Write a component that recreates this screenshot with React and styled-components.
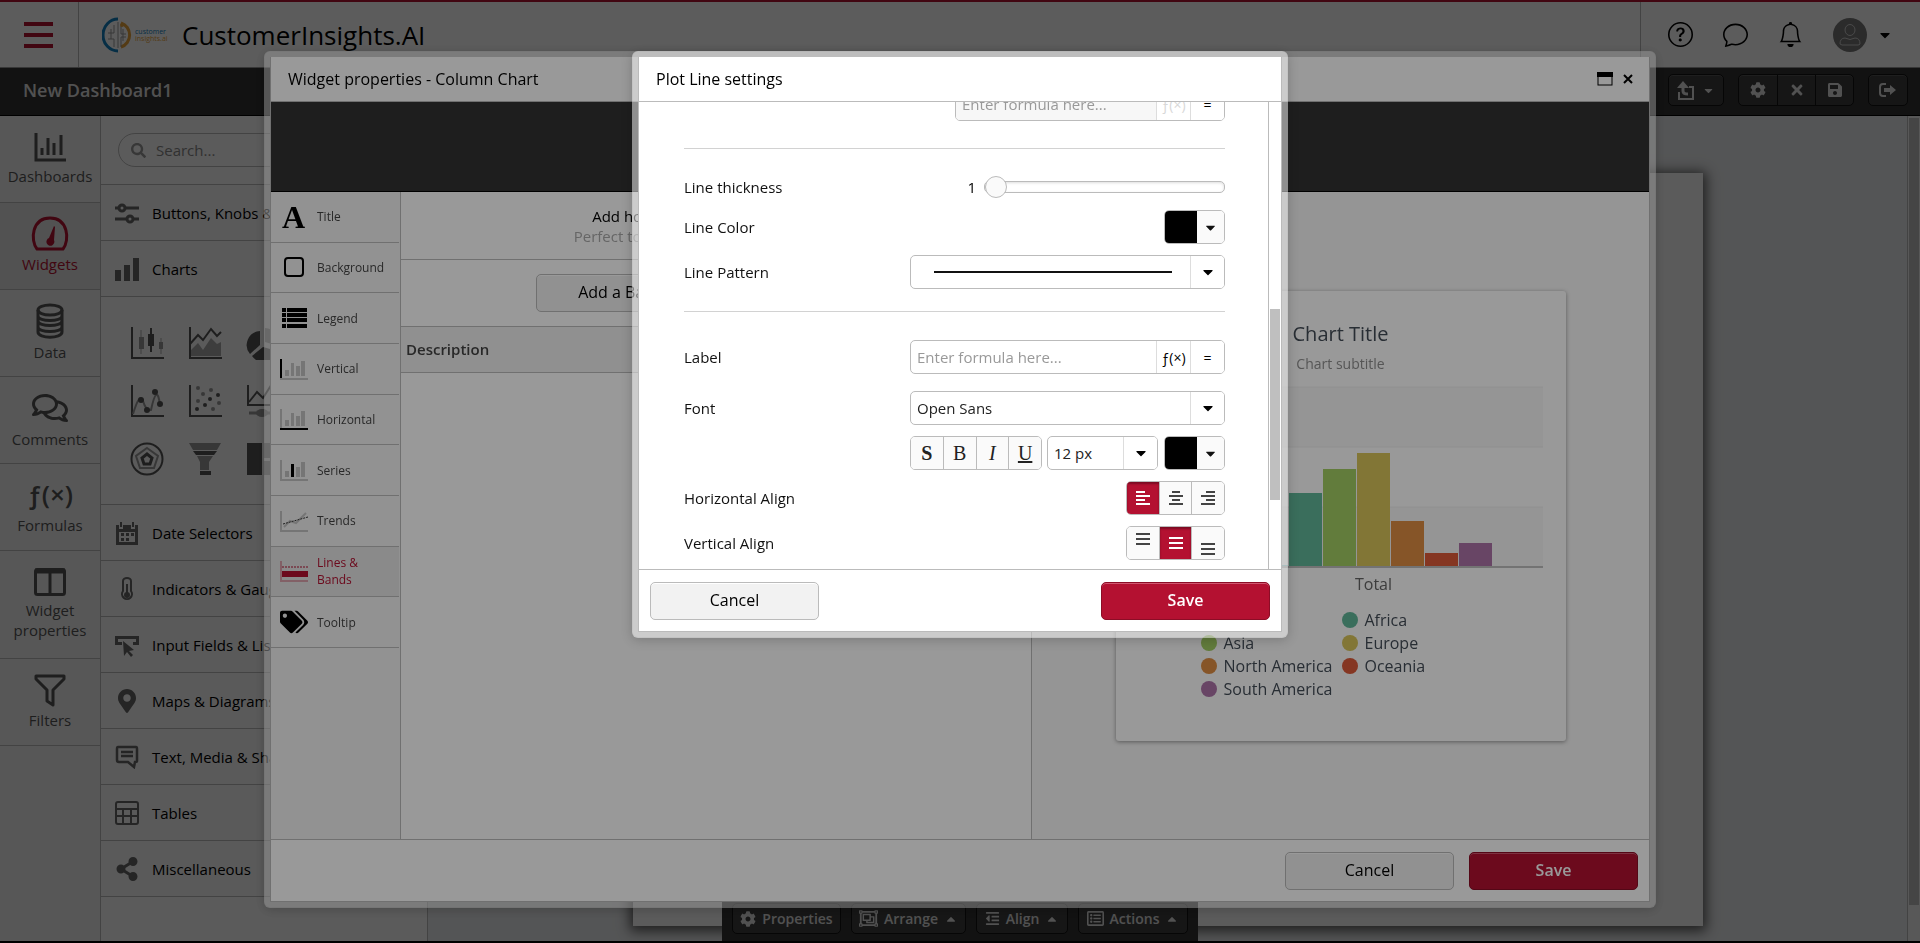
import React from "react";
import styled, { createGlobalStyle, css } from "styled-components";
import { FaRegComments, FaMapMarkerAlt, FaShareAlt, FaTags, FaCog, FaTimes, FaSave, FaOutdent, FaRegListAlt, FaRegObjectGroup, FaSearch, FaCaretDown, FaCaretUp } from "react-icons/fa";
import { BsQuestionCircle, BsChat, BsBell } from "react-icons/bs";

const red = "#b41131";
const line = "#bbbbbb";
const dark = "#323232";

const GlobalStyle = createGlobalStyle`
  * { box-sizing: border-box; }
  html, body, #root { height: 100%; }
  body { margin: 0; overflow: hidden; background: #000; }
  body, button, input, select { font-family: "Open Sans", "Noto Sans", sans-serif; font-size: 16px; color: #000; }
  button { padding: 0; cursor: pointer; }
  h1, h2, p { margin: 0; font-weight: 400; }
`;

/* ---------- page ---------- */

const Page = styled.div`
  display: flex;
  flex-direction: column;
  height: 100vh;
  border-bottom: 2px solid #000;
  background: #fff;
`;

const Header = styled.header`
  display: flex;
  align-items: stretch;
  height: 68px;
  border-top: 2px solid ${red};
  border-bottom: 1px solid #999;
  background: #fff;
`;

const MenuButton = styled.button`
  display: flex;
  flex-direction: column;
  align-items: center;
  justify-content: center;
  gap: 7px;
  width: 79px;
  padding-right: 2px;
  border: 0;
  border-right: 1px solid ${line};
  background: none;
  span { width: 29px; height: 4px; background: ${red}; }
`;

const Brand = styled.div`
  display: flex;
  align-items: center;
  flex: 1;
  gap: 12px;
  padding-left: 23px;
  h1 { font-size: 26px; line-height: 40px; }
`;

const HeaderTools = styled.nav`
  display: flex;
  align-items: center;
  gap: 30px;
  padding: 0 27px;
  border-left: 1px solid ${line};
`;

const IconButton = styled.button`
  display: flex;
  align-items: center;
  gap: 10px;
  border: 0;
  background: none;
  svg { display: block; }
`;

const Avatar = styled.span`
  display: flex;
  align-items: center;
  justify-content: center;
  width: 34px;
  height: 34px;
  border-radius: 50%;
  background: #777;
`;

const TitleBar = styled.div`
  display: flex;
  align-items: center;
  justify-content: space-between;
  height: 48px;
  padding: 0 12px 3px 23px;
  border-bottom: 1px solid #000;
  background: ${dark};
  h2 { color: #e0e0e0; font-size: 18px; font-weight: 600; }
`;

const ToolGroups = styled.div`
  display: flex;
  gap: 14px;
`;

const ToolGroup = styled.div`
  display: flex;
  border: 1px solid #111;
  border-radius: 5px;
  background: #3e3e3e;
  box-shadow: inset 0 1px 0 #555;
`;

const ToolButton = styled.button`
  display: flex;
  align-items: center;
  justify-content: center;
  gap: 8px;
  width: ${(p) => (p.$wide ? 54 : 38)}px;
  height: 30px;
  border: 0;
  background: none;
  color: #e0e0e0;
  & + & { border-left: 1px solid #111; }
`;

const Workspace = styled.div`
  display: flex;
  flex: 1;
  min-height: 0;
`;

const Rail = styled.nav`
  width: 101px;
  border-right: 1px solid ${line};
  background: #f1f1f1;
`;

const RailItem = styled.button`
  display: flex;
  flex-direction: column;
  align-items: center;
  justify-content: center;
  gap: 3px;
  width: 100%;
  height: ${(p) => (p.$tall ? 108 : 87)}px;
  padding-bottom: 2px;
  border: 0;
  border-bottom: 1px solid ${line};
  background: ${(p) => (p.$active ? "#e2e2e2" : "none")};
  color: ${(p) => (p.$active ? red : "#555")};
  font-size: 15px;
  line-height: 20px;
  svg { display: block; }
`;

const RailFormula = styled.span`
  height: 34px;
  font-size: 26px;
  font-weight: 600;
  line-height: 32px;
`;

const Panel = styled.aside`
  width: 327px;
  border-right: 1px solid ${line};
  background: #fbfbfb;
`;

const SearchArea = styled.div`
  height: 69px;
  padding: 17px;
  border-bottom: 1px solid ${line};
`;

const SearchBox = styled.label`
  display: flex;
  align-items: center;
  gap: 8px;
  height: 34px;
  padding: 0 12px;
  border: 1px solid ${line};
  border-radius: 17px;
  color: #999;
  input { flex: 1; min-width: 0; border: 0; background: none; outline: 0; font-size: 15px; }
  input::placeholder { color: #888; }
`;

const PanelRow = styled.button`
  display: flex;
  align-items: center;
  gap: 13px;
  width: 100%;
  height: 56px;
  padding: 0 14px;
  border: 0;
  border-bottom: 1px solid ${line};
  background: #f9f9f9;
  font-size: 15px;
  white-space: nowrap;
  svg { flex: none; width: 24px; height: 24px; color: #666; }
`;

const ChartGrid = styled.div`
  display: grid;
  grid-template-columns: repeat(5, 34px);
  grid-auto-rows: 34px;
  gap: 24px;
  height: 208px;
  padding: 29px;
  border-bottom: 1px solid ${line};
`;

const Canvas = styled.main`
  display: flex;
  flex: 1;
  justify-content: center;
  padding-top: 57px;
  padding-bottom: 15px;
  background: #e9ebed;
`;

const Sheet = styled.div`
  width: 1070px;
  background: #fbfbfb;
  box-shadow: 0 2px 12px 3px #555;
`;

const Track = styled.div`
  display: flex;
  flex-direction: column;
  width: 13px;
  padding: ${(p) => p.$top}px 1px 0;
  border-left: 1px solid ${line};
  background: ${(p) => p.$bg};
`;

const Thumb = styled.div`
  height: ${(p) => p.$size};
  background: #bfbfbf;
`;

const Dock = styled.div`
  position: fixed;
  bottom: 2px;
  left: 50%;
  transform: translateX(-50%);
  display: flex;
  align-items: flex-end;
  gap: 10px;
  height: 40px;
  padding: 0 10px 7px;
  background: ${dark};
`;

const DockButton = styled.button`
  display: flex;
  align-items: center;
  justify-content: center;
  gap: 6px;
  width: ${(p) => p.$width}px;
  height: 31px;
  border: 1px solid #111;
  border-radius: 5px;
  background: #3e3e3e;
  color: #e0e0e0;
  font-size: 14px;
  font-weight: 600;
  white-space: nowrap;
  svg { flex: none; }
`;

/* ---------- dialogs ---------- */

const Backdrop = styled.div`
  position: fixed;
  inset: 0;
  display: flex;
  align-items: ${(p) => (p.$fill ? "stretch" : "flex-start")};
  justify-content: center;
  padding: 51px 0 35px;
  background: rgba(0, 0, 0, 0.4);
`;

const Dialog = styled.section`
  display: flex;
  flex-direction: column;
  width: ${(p) => p.$width};
  border: 6px solid rgba(255, 255, 255, 0.5);
  border-radius: 6px;
  background: #fff;
  background-clip: padding-box;
  box-shadow: 0 2px 12px rgba(0, 0, 0, 0.2);
`;

const DialogInner = styled.div`
  display: flex;
  flex: 1;
  flex-direction: column;
  min-height: 0;
  border: 1px solid #bbb;
  border-top: 0;
`;

const DialogHead = styled.header`
  display: flex;
  align-items: center;
  justify-content: space-between;
  height: 45px;
  padding: 0 16px 0 17px;
  border-bottom: 1px solid ${line};
  line-height: 22px;
`;

const HeadTools = styled.div`
  display: flex;
  align-items: center;
  gap: 10px;
`;

const Strip = styled.div`
  height: 90px;
  border-bottom: 1px solid #000;
  background: ${dark};
`;

const DialogFoot = styled.footer`
  display: flex;
  justify-content: ${(p) => (p.$split ? "space-between" : "flex-end")};
  gap: 15px;
  height: 62px;
  padding: 12px 11px 0;
  border-top: 1px solid ${line};
`;

const Button = styled.button`
  width: ${(p) => p.$width || 169}px;
  height: 38px;
  padding-bottom: 2px;
  border: 1px solid ${line};
  border-radius: 5px;
  background: #f2f2f2;
  box-shadow: inset 0 1px 0 #fff;
  ${(p) =>
    p.$primary &&
    css`
      border-color: #8c0d26;
      background: ${red};
      box-shadow: inset 0 1px 0 #d0566f;
      color: #fff;
      font-weight: 600;
    `}
`;

const PropsBody = styled.div`
  display: flex;
  flex: 1;
  min-height: 0;
`;

const PropsNav = styled.nav`
  width: 130px;
  padding-right: 1px;
  border-right: 1px solid ${line};
  background: #f3f3f3;
`;

const PropsTabs = styled.div`
  display: grid;
  grid-template-rows: repeat(9, 1fr);
  height: 456px;
`;

const PropsTab = styled.button`
  display: flex;
  align-items: center;
  gap: 9px;
  padding: 0 9px;
  border: 0;
  border-bottom: 1px solid ${line};
  background: ${(p) => (p.$active ? "#e6e6e6" : "none")};
  color: ${(p) => (p.$active ? red : "#444")};
  font-size: 12px;
  line-height: 17px;
  text-align: left;
  svg { flex: none; width: 28px; height: 24px; }
`;

const TabName = styled.span`
  max-width: 60px;
`;

const SerifIcon = styled.span`
  width: 28px;
  color: #000;
  font-family: "Liberation Serif", serif;
  font-size: 32px;
  font-weight: 700;
  line-height: 30px;
  padding-left: 2px;
`;

const PropsMain = styled.div`
  width: 631px;
  border-right: 1px solid ${line};
`;

const Intro = styled.div`
  height: 68px;
  padding-top: 14px;
  border-bottom: 1px solid ${line};
  font-size: 15px;
  line-height: 20px;
  text-align: center;
  p + p { color: #aaa; }
`;

const AddBar = styled.div`
  display: flex;
  justify-content: center;
  gap: 20px;
  height: 67px;
  padding-top: 14px;
  border-bottom: 1px solid ${line};
`;

const ItemTable = styled.table`
  width: 100%;
  border-collapse: collapse;
  th {
    height: 45px;
    padding: 0 5px;
    border-bottom: 1px solid ${line};
    background: #f0f0f0;
    color: #444;
    font-size: 15px;
    font-weight: 600;
    text-align: left;
  }
`;

const Preview = styled.div`
  display: flex;
  flex: 1;
  align-items: center;
  justify-content: center;
  background: #f8f8f8;
`;

const ChartCard = styled.figure`
  display: flex;
  flex-direction: column;
  width: 450px;
  height: 450px;
  margin: 0;
  padding-top: 29px;
  border-radius: 3px;
  background: #fff;
  box-shadow: 0 1px 4px rgba(0, 0, 0, 0.4);
  color: #444d58;
  text-align: center;
`;

const ChartTitle = styled.figcaption`
  font-size: 20px;
  line-height: 28px;
`;

const ChartSubtitle = styled.p`
  padding: 4px 0;
  color: #909090;
  font-size: 14px;
  line-height: 24px;
`;

const Plot = styled.svg`
  display: block;
  flex: none;
  width: 450px;
  height: 192px;
`;

const AxisLabel = styled.p`
  padding-left: 66px;
  color: #666;
  line-height: 24px;
`;

const Legend = styled.ul`
  display: grid;
  grid-template-columns: 141px 120px;
  grid-auto-rows: 23px;
  margin: 13px 0 0;
  padding: 0 0 0 85px;
  list-style: none;
  li { display: flex; align-items: center; gap: 7px; line-height: 23px; white-space: nowrap; }
`;

const Dot = styled.span`
  width: 16px;
  height: 16px;
  border-radius: 50%;
  background: ${(p) => p.$color};
`;

/* ---------- plot line form ---------- */

const FormArea = styled.div`
  display: flex;
  height: 467px;
`;

const Form = styled.form`
  display: flex;
  flex: 1;
  flex-direction: column;
  justify-content: flex-end;
  overflow: hidden;
  padding: 0 43px 9px 45px;
`;

const Row = styled.div`
  display: flex;
  flex: none;
  align-items: center;
  justify-content: flex-end;
  height: 34px;
  margin-top: ${(p) => p.$gap || 11}px;
  > label, > span:first-child { margin-right: auto; color: #111; font-size: 15px; }
`;

const Divider = styled.hr`
  flex: none;
  width: 100%;
  height: 1px;
  margin: ${(p) => p.$gap}px 0 0;
  border: 0;
  background: #d2d2d2;
`;

const Field = styled.div`
  display: flex;
  align-items: stretch;
  width: ${(p) => p.$width}px;
  height: 34px;
  margin-left: ${(p) => p.$gap || 0}px;
  overflow: hidden;
  border: 1px solid ${line};
  border-radius: 5px;
  background: ${(p) => p.$bg || "#fff"};
  input, select { flex: 1; min-width: 0; padding: 0 6px; border: 0; background: none; outline: 0; font-size: 15px; appearance: none; color: #222; opacity: 1; }
  input::placeholder { color: #999; }
  input:disabled { background: #f7f7f7; }
`;

const Addon = styled.button`
  display: flex;
  align-items: center;
  justify-content: center;
  width: 34px;
  border: 0;
  border-left: 1px solid #ddd;
  background: #fff;
  color: #000;
  font-size: 14px;
  &:disabled { color: #d8d8d8; }
`;

const Swatch = styled.span`
  width: 32px;
  background: #000;
`;

const PatternLine = styled.button`
  display: flex;
  flex: 1;
  align-items: center;
  padding: 0 18px 0 23px;
  border: 0;
  background: none;
  span { flex: 1; height: 2px; background: #111; }
`;

const Segment = styled.button`
  display: flex;
  flex: 1;
  align-items: center;
  justify-content: center;
  border: 0;
  background: ${(p) => (p.$active ? red : "#fafafa")};
  box-shadow: ${(p) => (p.$active ? "inset 0 2px 2px #7c0c22" : "none")};
  color: ${(p) => (p.$active ? "#fff" : "#444")};
  & + & { border-left: 1px solid ${line}; }
`;

const Glyph = styled.span`
  color: #222;
  font-family: "Liberation Serif", serif;
  font-size: 20px;
  line-height: 22px;
  font-weight: ${(p) => (p.$bold ? 700 : 400)};
  font-style: ${(p) => (p.$italic ? "italic" : "normal")};
  text-decoration: ${(p) => (p.$under ? "underline" : "none")};
`;

const Output = styled.output`
  margin-right: 8px;
  font-size: 15px;
`;

const Slider = styled.input`
  width: 241px;
  height: 22px;
  margin: 0;
  appearance: none;
  background: none;
  &::-webkit-slider-runnable-track {
    height: 12px;
    border: 1px solid ${line};
    border-radius: 5px;
    background: #fff;
    box-shadow: inset 0 1px 3px #ddd;
  }
  &::-webkit-slider-thumb {
    appearance: none;
    width: 22px;
    height: 22px;
    margin-top: -6px;
    border: 1px solid ${line};
    border-radius: 50%;
    background: #fafafa;
  }
`;

/* ---------- drawings ---------- */

const Logo = () => (
  <svg width="68" height="36" viewBox="0 0 68 36">
    <path d="M16 2A15 16 0 0 0 16 34" fill="none" stroke="#1380c0" strokeWidth="3" />
    <path d="M19 6A12 12.500 0 0 1 19 30" fill="none" stroke="#e8a33a" strokeWidth="3" />
    <path d="M16 5v26M12 8v8H6M12 30v-8H6M9 12v10M19 30V20h5M19 9v8h5M21 12v12" fill="none" stroke="#999" strokeWidth="1" />
    <circle cx="20" cy="8" r="2" fill="#e8a33a" />
    <text x="33" y="17" fontFamily="Open Sans" fontSize="7" fill="#1380c0">customer</text>
    <text x="33" y="24" fontFamily="Open Sans" fontSize="7" fill="#e8a33a">insights.ai</text>
  </svg>
);

const BarsIcon = () => (
  <svg width="34" height="32" viewBox="0 0 34 32" fill="none" stroke="currentColor">
    <path d="M3 2v27h30" strokeWidth="3" /><path d="M9 24v-7M15 24V7M21 24V12M28 24V4" strokeWidth="3" />
  </svg>
);
const GaugeIcon = () => (
  <svg width="38" height="35" viewBox="0 0 38 35" fill="none" stroke="currentColor" strokeWidth="3" strokeLinejoin="round">
    <path d="M6 33C-1 24 1 2 19 2s20 22 13 31z" />
    <path d="M23 10l1 1-1 13a4 4 0 1 1-5-2z" fill="currentColor" stroke="none" />
  </svg>
);
const DataIcon = () => (
  <svg width="30" height="36" viewBox="0 0 30 36" fill="none" stroke="currentColor" strokeWidth="3">
    <ellipse cx="15" cy="7" rx="12" ry="5" /><path d="M3 7v22c0 7 24 7 24 0V7M3 13c0 6 24 6 24 0M3 18c0 6 24 6 24 0M3 24c0 6 24 6 24 0" />
  </svg>
);
const ColumnsIcon = () => (
  <svg width="34" height="30" viewBox="0 0 34 30" fill="none" stroke="currentColor" strokeWidth="3">
    <rect x="2.500" y="2.500" width="29" height="25" rx="2" /><path d="M17 3v24" /><path d="M2 4h30" strokeWidth="5" />
  </svg>
);
const FunnelIcon = () => (
  <svg width="34" height="34" viewBox="0 0 34 34" fill="none" stroke="currentColor" strokeWidth="3" strokeLinejoin="round">
    <path d="M3 3h28v3L20 17v15l-6-4V17L3 6z" />
  </svg>
);

const SlidersIcon = () => (
  <svg viewBox="0 0 24 24" fill="none" stroke="currentColor" strokeWidth="3">
    <path d="M0 7h4M10 7h14M0 18h11M18 18h6" /><circle cx="7" cy="7" r="3" /><circle cx="15" cy="18" r="3" />
  </svg>
);
const ChartsIcon = () => (
  <svg viewBox="0 0 24 24" fill="currentColor"><path d="M0 13h6v11H0zM9 8h6v16H9zM18 1h6v23h-6z" /></svg>
);
const CalendarIcon = () => (
  <svg viewBox="0 0 24 24" fill="currentColor">
    <path fillRule="evenodd" d="M1 4h3v4h4V4h8v4h4V4h3v20H1zM4 11v10h16V11zM5 1h2v5H5zM17 1h2v5h-2z" />
    <path d="M6 12h3v3H6zM11 12h3v3h-3zM16 12h3v3h-3zM6 17h3v3H6zM11 17h3v3h-3z" />
  </svg>
);
const ThermoIcon = () => (
  <svg viewBox="0 0 24 24" fill="none" stroke="currentColor" strokeWidth="2">
    <path d="M8 14V4a4 3 0 0 1 8 0v10a5 5 0 1 1-8 0z" /><path d="M12 7v10" strokeWidth="2" /><circle cx="12" cy="18" r="2" fill="currentColor" />
  </svg>
);
const InputIcon = () => (
  <svg viewBox="0 0 24 24" fill="currentColor">
    <path d="M0 3h24v9h-6V9h3V6H3v3h4v3H0z" /><path d="M8 8l11 9-5 1 4 4-2 2-4-5-3 4z" />
  </svg>
);
const TextIcon = () => (
  <svg viewBox="0 0 24 24" fill="none" stroke="currentColor" strokeWidth="2.500">
    <path d="M3 2h18q1 0 1 2v12q0 1-2 1l-1 5-6-5H4q-2 0-2-2V4q0-2 1-2zM6 7h12M6 11h12" />
  </svg>
);
const TableIcon = () => (
  <svg viewBox="0 0 24 24" fill="none" stroke="currentColor" strokeWidth="2">
    <rect x="1" y="1" width="22" height="22" rx="2" /><path d="M1 8h22M1 15h22M8 8v15M16 8v15" />
  </svg>
);

const axes = <path d="M2 1v31h32" fill="none" stroke="#555" strokeWidth="2" />;
const chartIcons = [
  <>{axes}<path d="M11 4v24M31 12v16" stroke="#aaa" strokeWidth="1" /><path d="M9 11h5v12H9zM29 16h4v7h-4z" fill="#999" /><path d="M21 2v24" stroke="#555" strokeWidth="2" /><path d="M18 8h6v12h-6z" fill="#555" /></>,
  <>{axes}<path d="M3 30V24l7-7 5 7 8-12 6 6 4-2v14z" fill="#aaa" /><path d="M2 18l8-9 5 5 8-11 6 7 4-4" fill="none" stroke="#555" strokeWidth="2" /></>,
  <><path d="M14 5v14L4 28A14 14 0 0 1 14 5z" fill="#555" /><path d="M17 21l14 4A14 14 0 0 1 6 30z" fill="#555" /><path d="M19 2a15 15 0 0 1 14 18l-14-4z" fill="#999" /></>,
  null, null,
  <>{axes}<path d="M3 30q7-23 10-13t8 9q6-28 9-5" fill="none" stroke="#999" strokeWidth="2" /><g fill="#555"><circle cx="11" cy="16" r="3" /><circle cx="17" cy="26" r="3" /><circle cx="25" cy="8" r="3" /><circle cx="30" cy="20" r="3" /></g></>,
  <>{axes}<g fill="#999"><circle cx="10" cy="4" r="2" /><circle cx="23" cy="6" r="2" /><circle cx="15" cy="10" r="2" /><circle cx="10" cy="17" r="2" /><circle cx="31" cy="19" r="2" /><circle cx="25" cy="25" r="2" /></g><g fill="#555"><circle cx="9" cy="25" r="2" /><circle cx="17" cy="21" r="2" /><circle cx="22" cy="15" r="2" /><circle cx="30" cy="11" r="2" /></g></>,
  <><path d="M2 1v20h32M3 18l8-10 6 6 7-11 9 12" fill="none" stroke="#555" strokeWidth="2" /><path d="M3 29h9q5-5 9 0h11" fill="none" stroke="#999" strokeWidth="3" /><ellipse cx="16" cy="29" rx="6" ry="4" fill="#999" /></>,
  null, null,
  <><circle cx="17" cy="17" r="15.500" fill="none" stroke="#555" strokeWidth="2" /><path d="M17 6l11 8-4 12H10L6 14z" fill="none" stroke="#999" strokeWidth="2" /><path d="M17 12l5 4-2 6h-6l-2-6z" fill="none" stroke="#555" strokeWidth="3" /></>,
  <><path d="M1 1h32l-4 7H5zM9 14h16l-4 6v8h-9v-8z" fill="#999" /><path d="M5 9h24l-3 4H8zM12 29h11v4H12z" fill="#555" /></>,
  <><path d="M1 1h15v32H1z" fill="#555" /><path d="M18 1h15v15H18zM18 19h15v14H18z" fill="#999" /></>,
];

const MiniBars = ({ v = "#c4c4c4", h = "#c4c4c4", s = "#c4c4c4" }) => (
  <svg viewBox="0 0 28 24">
    <path d="M1 2v20" stroke={v} strokeWidth="2" /><path d="M0 22h28" stroke={h} strokeWidth="2" />
    <path d="M5 13h4v6H5zM16 9h4v10h-4zM21 4h4v15h-4z" fill="#c4c4c4" /><path d="M11 6h3v13h-3z" fill={s} />
  </svg>
);

const propTabs = [
  ["Title", <SerifIcon key="i">A</SerifIcon>],
  ["Background", <svg key="i" viewBox="0 0 28 24"><rect x="5" y="3" width="18" height="18" rx="3" fill="none" stroke="#000" strokeWidth="2" /></svg>],
  ["Legend", <svg key="i" viewBox="0 0 28 24" fill="#000"><path d="M2 2h4v4H2zM7 2h20v4H7zM2 7h4v4H2zM7 7h20v4H7zM2 12h4v4H2zM7 12h20v4H7zM2 18h4v4H2zM7 18h20v4H7z" /></svg>],
  ["Vertical", <MiniBars key="i" v="#000" />],
  ["Horizontal", <MiniBars key="i" h="#000" />],
  ["Series", <MiniBars key="i" s="#000" />],
  ["Trends", <svg key="i" viewBox="0 0 28 24" fill="none"><path d="M1 2v20h27" stroke="#c4c4c4" strokeWidth="2" /><path d="M4 18l6-6 6 2L26 4" stroke="#c4c4c4" strokeWidth="2" /><path d="M3 15L28 8" stroke="#333" strokeWidth="1" strokeDasharray="2 1" /></svg>],
  ["Lines & Bands", <svg key="i" viewBox="0 0 28 24" fill="none"><path d="M1 2v20h27" stroke="#d9a0ab" strokeWidth="2" /><path d="M2 8h26" stroke={red} strokeWidth="1" strokeDasharray="2 1" /><path d="M2 12h26v6H2z" fill={red} /></svg>],
  ["Tooltip", <FaTags key="i" color="#000" />],
];

const AlignIcon = ({ rows, y = 3 }) => (
  <svg width="16" height="24" viewBox="0 0 16 24" fill="none" stroke="currentColor" strokeWidth="2">
    {rows.map(([a, b], i) => <path key={i} d={`M${a} ${y + i * (rows.length === 3 ? 5 : 4)}H${b}`} />)}
  </svg>
);

const full = [[1, 15], [1, 15], [1, 15]];

const ExitIcon = () => (
  <svg width="18" height="14" viewBox="0 0 18 14" fill="none" stroke="currentColor" strokeWidth="2">
    <path d="M7 1H4Q1 1 1 4v6q0 3 3 3h3" /><path d="M5 5h6V2l6 5-6 5V9H5z" fill="currentColor" stroke="none" />
  </svg>
);
const ReturnIcon = () => (
  <svg width="17" height="19" viewBox="0 0 17 19" fill="none" stroke="currentColor">
    <path d="M6 4v6q0 3 5 3" strokeWidth="3" /><path d="M0 7L6 0l6 7z" fill="currentColor" stroke="none" /><path d="M2 11v7h14V6h-4" strokeWidth="2" />
  </svg>
);

/* ---------- data ---------- */

const rail = [
  ["Dashboards", <BarsIcon key="i" />],
  ["Widgets", <GaugeIcon key="i" />],
  ["Data", <DataIcon key="i" />],
  ["Comments", <FaRegComments key="i" size="36" />],
  ["Formulas", <RailFormula key="i">ƒ(×)</RailFormula>],
  ["Widget properties", <ColumnsIcon key="i" />],
  ["Filters", <FunnelIcon key="i" />],
];

const lowerRows = [
  ["Date Selectors", <CalendarIcon key="i" />],
  ["Indicators & Gauges", <ThermoIcon key="i" />],
  ["Input Fields & Lists", <InputIcon key="i" />],
  ["Maps & Diagrams", <FaMapMarkerAlt key="i" />],
  ["Text, Media & Shapes", <TextIcon key="i" />],
  ["Tables", <TableIcon key="i" />],
  ["Miscellaneous", <FaShareAlt key="i" />],
];

const series = [
  ["Arctic", "#8fd3d6", 2],
  ["Africa", "#62b89a", 74],
  ["Asia", "#a3cf64", 98],
  ["Europe", "#d9c55b", 114],
  ["North America", "#e08e43", 46],
  ["Oceania", "#de5a39", 14],
  ["South America", "#ad73a9", 24],
];

const ColumnChart = () => (
  <Plot viewBox="0 0 450 192">
    <path d="M89 7h338v60H89zM89 127h338v60H89z" fill="#f8f8f8" />
    <path d="M89 7h338M89 67h338M89 127h338" stroke="#f0f0f0" />
    {series.map(([name, color, h], i) => (
      <rect key={name} x={139 + i * 34} y={187 - h} width="33" height={h} fill={color} />
    ))}
    <path d="M89 187h338" stroke="#c0c0c0" strokeWidth="2" />
  </Plot>
);

const ColorPicker = ({ gap, label }) => (
  <Field $width={61} $gap={gap}>
    <Swatch />
    <Segment type="button" aria-label={label}><FaCaretDown size="15" color="#111" /></Segment>
  </Field>
);

const SegmentGroup = ({ items, active, label }) => (
  <Field $width={99} role="group" aria-label={label}>
    {items.map((rows, i) => (
      <Segment key={i} type="button" $active={i === active} aria-pressed={i === active}>{rows}</Segment>
    ))}
  </Field>
);

export default function App() {
  return (
    <>
      <GlobalStyle />
      <Page>
        <Header>
          <MenuButton aria-label="Menu"><span /><span /><span /></MenuButton>
          <Brand><Logo /><h1>CustomerInsights.AI</h1></Brand>
          <HeaderTools>
            <IconButton aria-label="Help"><BsQuestionCircle size="25" /></IconButton>
            <IconButton aria-label="Chat"><BsChat size="25" /></IconButton>
            <IconButton aria-label="Notifications"><BsBell size="25" /></IconButton>
            <IconButton aria-label="Account">
              <Avatar>
                <svg width="22" height="22" viewBox="0 0 22 22" fill="none" stroke="#ccc" strokeWidth="1">
                  <ellipse cx="11" cy="6" rx="5" ry="5.500" /><path d="M1 20q0-6 5-6 5 3 10 0 5 0 5 6-1 1-2 1H3z" />
                </svg>
              </Avatar>
              <FaCaretDown size="16" />
            </IconButton>
          </HeaderTools>
        </Header>
        <TitleBar>
          <h2>New Dashboard1</h2>
          <ToolGroups>
            <ToolGroup><ToolButton $wide aria-label="Go up"><ReturnIcon /><FaCaretDown size="13" /></ToolButton></ToolGroup>
            <ToolGroup>
              <ToolButton aria-label="Settings"><FaCog size="16" /></ToolButton>
              <ToolButton aria-label="Discard"><FaTimes size="16" /></ToolButton>
              <ToolButton aria-label="Save dashboard"><FaSave size="16" /></ToolButton>
            </ToolGroup>
            <ToolGroup><ToolButton aria-label="Exit"><ExitIcon /></ToolButton></ToolGroup>
          </ToolGroups>
        </TitleBar>
        <Workspace>
          <Rail>
            {rail.map(([name, icon], i) => (
              <RailItem key={name} $active={i === 1} $tall={i === 5}>{icon}{name}</RailItem>
            ))}
          </Rail>
          <Panel>
            <SearchArea>
              <SearchBox><FaSearch size="15" /><input type="search" aria-label="Search" placeholder="Search..." /></SearchBox>
            </SearchArea>
            <PanelRow><SlidersIcon />Buttons, Knobs &amp; Sliders</PanelRow>
            <PanelRow><ChartsIcon />Charts</PanelRow>
            <ChartGrid>
              {chartIcons.map((icon, i) => <svg key={i} viewBox="0 0 34 34">{icon}</svg>)}
            </ChartGrid>
            {lowerRows.map(([name, icon]) => <PanelRow key={name}>{icon}{name}</PanelRow>)}
          </Panel>
          <Canvas><Sheet /></Canvas>
          <Track $top={2} $bg="#f4f4f4"><Thumb $size="calc(100% - 36px)" /></Track>
        </Workspace>
        <Dock>
          <DockButton $width={109}><FaCog size="16" />Properties</DockButton>
          <DockButton $width={115}><FaRegObjectGroup size="19" />Arrange<FaCaretUp size="14" /></DockButton>
          <DockButton $width={92}><FaOutdent size="15" />Align<FaCaretUp size="14" /></DockButton>
          <DockButton $width={110}><FaRegListAlt size="17" />Actions<FaCaretUp size="14" /></DockButton>
        </Dock>
      </Page>

      <Backdrop $fill>
        <Dialog $width="calc(100% - 528px)" role="dialog" aria-label="Widget properties">
          <DialogInner>
            <DialogHead>
              Widget properties - Column Chart
              <HeadTools>
                <IconButton aria-label="Maximize">
                  <svg width="16" height="14" viewBox="0 0 16 14"><rect x="1" y="1" width="14" height="12" fill="none" stroke="#000" /><path d="M0 0h16v5H0z" /></svg>
                </IconButton>
                <IconButton aria-label="Close">
                  <svg width="10" height="10" viewBox="0 0 10 10"><path d="M1 1l8 8M9 1L1 9" stroke="#000" strokeWidth="2" /></svg>
                </IconButton>
              </HeadTools>
            </DialogHead>
            <Strip />
            <PropsBody>
              <PropsNav>
                <PropsTabs>
                  {propTabs.map(([name, icon], i) => <PropsTab key={name} $active={i === 7}>{icon}<TabName>{name}</TabName></PropsTab>)}
                </PropsTabs>
              </PropsNav>
              <PropsMain>
                <Intro>
                  <p>Add horizontal lines and plot bands</p>
                  <p>Perfect to show value ranges and targets</p>
                </Intro>
                <AddBar><Button $width={170}>Add a Band</Button><Button $width={170}>Add a Line</Button></AddBar>
                <ItemTable><thead><tr><th scope="col">Description</th></tr></thead></ItemTable>
              </PropsMain>
              <Preview>
                <ChartCard>
                  <ChartTitle>Chart Title</ChartTitle>
                  <ChartSubtitle>Chart subtitle</ChartSubtitle>
                  <ColumnChart />
                  <AxisLabel>Total</AxisLabel>
                  <Legend>
                    {series.map(([name, color]) => <li key={name}><Dot $color={color} />{name}</li>)}
                  </Legend>
                </ChartCard>
              </Preview>
            </PropsBody>
            <DialogFoot><Button>Cancel</Button><Button $primary>Save</Button></DialogFoot>
          </DialogInner>
        </Dialog>
      </Backdrop>

      <Backdrop>
        <Dialog $width="656px" role="dialog" aria-label="Plot Line settings">
          <DialogInner>
            <DialogHead>Plot Line settings</DialogHead>
            <FormArea>
              <Form>
                <Row>
                  <Field $width={270}>
                    <input disabled aria-label="Value formula" placeholder="Enter formula here..." />
                    <Addon type="button" disabled>ƒ(×)</Addon><Addon type="button">=</Addon>
                  </Field>
                </Row>
                <Divider $gap={27} />
                <Row $gap={21}>
                  <label htmlFor="thickness">Line thickness</label>
                  <Output htmlFor="thickness">1</Output>
                  <Slider id="thickness" type="range" min="1" max="20" defaultValue="1" />
                </Row>
                <Row $gap={6}><span>Line Color</span><ColorPicker label="Line Color" /></Row>
                <Row>
                  <span>Line Pattern</span>
                  <Field $width={315}>
                    <PatternLine type="button" aria-label="Line Pattern"><span /></PatternLine>
                    <Addon type="button" aria-label="Open patterns"><FaCaretDown size="16" /></Addon>
                  </Field>
                </Row>
                <Divider $gap={22} />
                <Row $gap={28}>
                  <label htmlFor="label">Label</label>
                  <Field $width={315}>
                    <input id="label" placeholder="Enter formula here..." />
                    <Addon type="button">ƒ(×)</Addon><Addon type="button">=</Addon>
                  </Field>
                </Row>
                <Row $gap={17}>
                  <label htmlFor="font">Font</label>
                  <Field $width={315}>
                    <select id="font"><option>Open Sans</option></select>
                    <Addon type="button" aria-label="Open fonts"><FaCaretDown size="16" /></Addon>
                  </Field>
                </Row>
                <Row>
                  <Field $width={132} role="group" aria-label="Font style">
                    <Segment type="button"><Glyph $bold>S</Glyph></Segment>
                    <Segment type="button"><Glyph>B</Glyph></Segment>
                    <Segment type="button"><Glyph $italic>I</Glyph></Segment>
                    <Segment type="button"><Glyph $under>U</Glyph></Segment>
                  </Field>
                  <Field $width={111} $gap={5}>
                    <select aria-label="Font size"><option>12 px</option></select>
                    <Addon type="button" aria-label="Open sizes"><FaCaretDown size="16" /></Addon>
                  </Field>
                  <ColorPicker gap={6} label="Font color" />
                </Row>
                <Row>
                  <span>Horizontal Align</span>
                  <SegmentGroup label="Horizontal Align" active={0} items={[
                    <AlignIcon key="l" y={6} rows={[[1, 10], [1, 15], [1, 10], [1, 15]]} />,
                    <AlignIcon key="c" y={6} rows={[[4, 12], [1, 15], [4, 12], [1, 15]]} />,
                    <AlignIcon key="r" y={6} rows={[[6, 15], [1, 15], [6, 15], [1, 15]]} />,
                  ]} />
                </Row>
                <Row>
                  <span>Vertical Align</span>
                  <SegmentGroup label="Vertical Align" active={1} items={[
                    <AlignIcon key="t" y={3} rows={full} />,
                    <AlignIcon key="m" y={7} rows={full} />,
                    <AlignIcon key="b" y={13} rows={full} />,
                  ]} />
                </Row>
              </Form>
              <Track $top={207} $bg="#fff"><Thumb $size="191px" /></Track>
            </FormArea>
            <DialogFoot $split><Button>Cancel</Button><Button $primary>Save</Button></DialogFoot>
          </DialogInner>
        </Dialog>
      </Backdrop>
    </>
  );
}
